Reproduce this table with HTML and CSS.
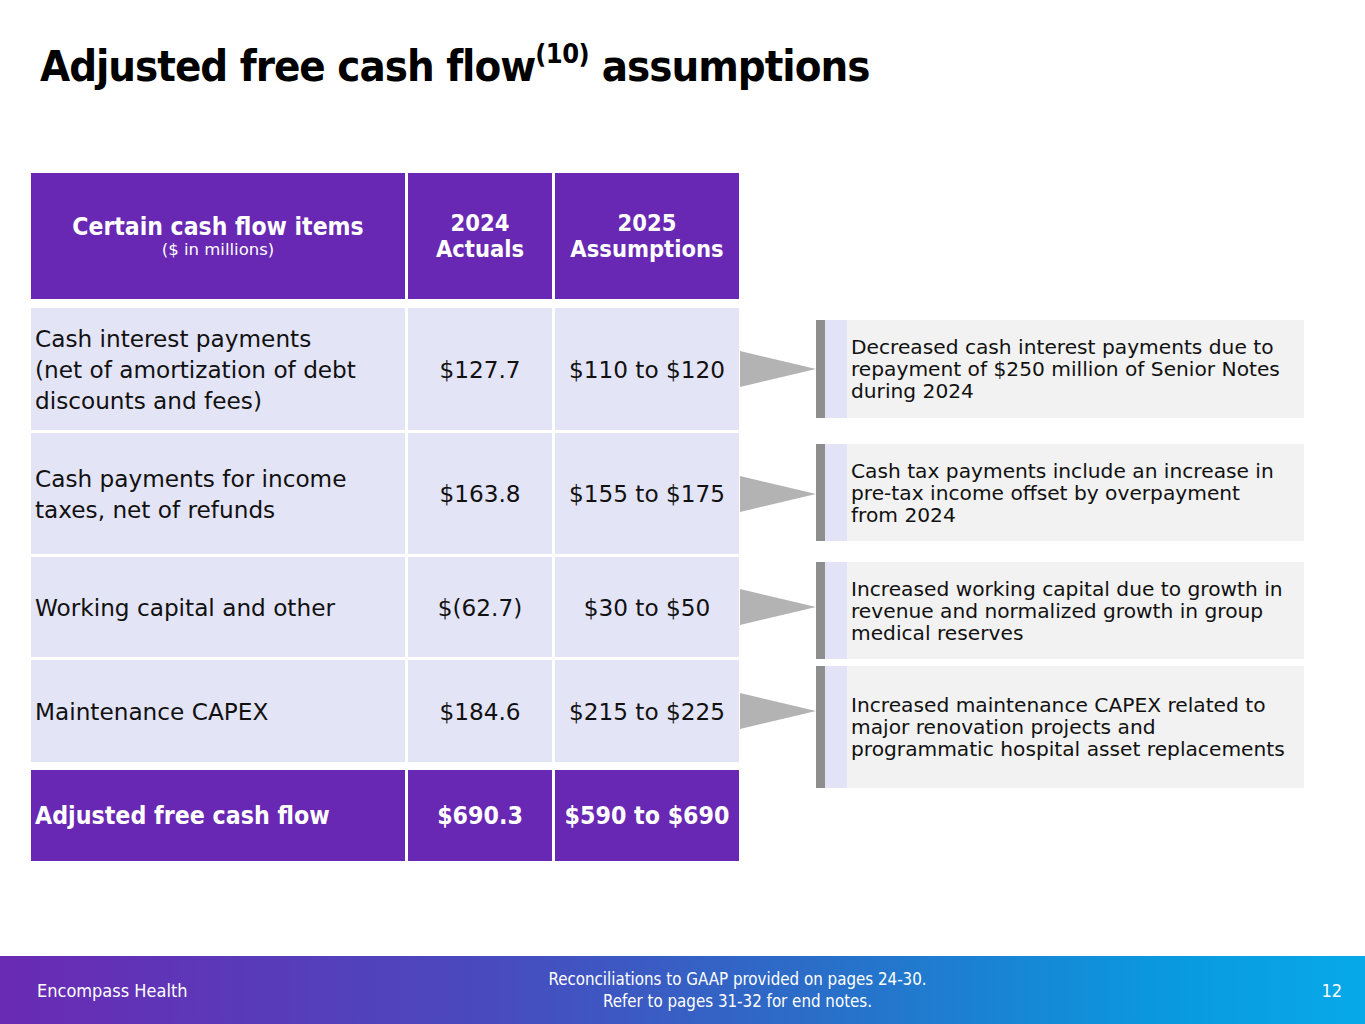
FILE: index.html
```html
<!DOCTYPE html>
<html lang="en">
<head>
<meta charset="utf-8">
<title>Adjusted free cash flow assumptions</title>
<link rel="stylesheet" href="styles.css">
</head>
<body>
<div class="slide">
  <h1 class="title">Adjusted free cash flow<sup>(10)</sup> assumptions</h1>
  <main class="content">
    <div class="table">
      <div class="row head">
        <div class="cell label-head"><span class="big">Certain cash flow items</span><span class="small">($ in millions)</span></div>
        <div class="cell center">2024<br>Actuals</div>
        <div class="cell center">2025<br>Assumptions</div>
        <div class="arrow-cell"></div>
      </div>
      <div class="body">
        <div class="row r1">
          <div class="cell label">Cash interest payments<br>(net of amortization of debt<br>discounts and fees)</div>
          <div class="cell center">$127.7</div>
          <div class="cell center">$110 to $120</div>
          <div class="arrow-cell"><svg class="arrow" width="76" height="36" viewBox="0 0 76 36"><polygon points="0,0 76,18 0,36" /></svg></div>
        </div>
        <div class="row r2">
          <div class="cell label">Cash payments for income<br>taxes, net of refunds</div>
          <div class="cell center">$163.8</div>
          <div class="cell center">$155 to $175</div>
          <div class="arrow-cell"><svg class="arrow" width="76" height="36" viewBox="0 0 76 36"><polygon points="0,0 76,18 0,36" /></svg></div>
        </div>
        <div class="row r3">
          <div class="cell label">Working capital and other</div>
          <div class="cell center">$(62.7)</div>
          <div class="cell center">$30 to $50</div>
          <div class="arrow-cell"><svg class="arrow" width="76" height="36" viewBox="0 0 76 36"><polygon points="0,0 76,18 0,36" /></svg></div>
        </div>
        <div class="row r4">
          <div class="cell label">Maintenance CAPEX</div>
          <div class="cell center">$184.6</div>
          <div class="cell center">$215 to $225</div>
          <div class="arrow-cell"><svg class="arrow" width="76" height="36" viewBox="0 0 76 36"><polygon points="0,0 76,18 0,36" /></svg></div>
        </div>
      </div>
      <div class="row total">
        <div class="cell label">Adjusted free cash flow</div>
        <div class="cell center">$690.3</div>
        <div class="cell center">$590 to $690</div>
        <div class="arrow-cell"></div>
      </div>
    </div>
    <div class="notes">
      <div class="note n1"><div class="note-text">Decreased cash interest payments due to<br>repayment of $250 million of Senior Notes<br>during 2024</div></div>
      <div class="note n2"><div class="note-text">Cash tax payments include an increase in<br>pre-tax income offset by overpayment<br>from 2024</div></div>
      <div class="note n3"><div class="note-text">Increased working capital due to growth in<br>revenue and normalized growth in group<br>medical reserves</div></div>
      <div class="note n4"><div class="note-text">Increased maintenance CAPEX related to<br>major renovation projects and<br>programmatic hospital asset replacements</div></div>
    </div>
  </main>
  <footer class="footer">
    <div class="brand">Encompass Health</div>
    <div class="foot-note">Reconciliations to GAAP provided on pages 24-30.<br>Refer to pages 31-32 for end notes.</div>
    <div class="page-num">12</div>
  </footer>
</div>
</body>
</html>
```
FILE: styles.css
```css
* { box-sizing: border-box; }
html, body { margin: 0; padding: 0; background: #ffffff; }
body {
  font-family: "DejaVu Sans", sans-serif;
  color: #111111;
}
.slide {
  width: 1365px;
  height: 1024px;
  position: relative;
  display: flex;
  flex-direction: column;
  overflow: hidden;
}
.title {
  margin: 0;
  padding: 39px 0 0 40px;
  font-family: "DejaVu Sans Condensed", "DejaVu Sans", sans-serif;
  font-stretch: condensed;
  font-size: 43.3px;
  letter-spacing: -1px;
  line-height: 54px;
  font-weight: bold;
  color: #000;
  height: 173px;
}
.title sup {
  font-size: 27px;
  letter-spacing: -0.5px;
  line-height: 0;
  vertical-align: 0;
  position: relative;
  top: -18px;
}
.content {
  display: flex;
  padding-left: 31px;
  flex: 1;
}
.table {
  display: flex;
  flex-direction: column;
}
.row {
  display: grid;
  grid-template-columns: 374px 144px 184px 74px;
  column-gap: 3px;
}
.cell {
  display: flex;
  align-items: center;
  font-size: 23.2px;
  line-height: 31px;
}
.center { justify-content: center; text-align: center; }
.head { height: 126px; margin-bottom: 9px; }
.head .cell {
  background: #6828b3;
  color: #fff;
  font-family: "DejaVu Sans Condensed", "DejaVu Sans", sans-serif;
  font-stretch: condensed;
  font-weight: bold;
  font-size: 23.5px;
  line-height: 26px;
}
.label-head {
  flex-direction: column;
  justify-content: center;
  text-align: center;
}
.label-head .big { font-size: 24.5px; line-height: 26px; padding-top: 2px; }
.label-head .small {
  font-family: "DejaVu Sans", sans-serif;
  font-stretch: normal;
  font-size: 16.5px;
  line-height: 20px;
  font-weight: normal;
}
.body { display: flex; flex-direction: column; gap: 3px; }
.body .cell { background: #e4e4f7; }
.label { padding-left: 4px; }
.r1 { height: 122px; }
.r2 { height: 121px; }
.r3 { height: 100px; }
.r4 { height: 102px; }
.total { height: 91px; margin-top: 8px; }
.total .cell {
  background: #6828b3;
  color: #fff;
  font-family: "DejaVu Sans Condensed", "DejaVu Sans", sans-serif;
  font-stretch: condensed;
  font-weight: bold;
  font-size: 24.7px;
}
.arrow-cell {
  display: flex;
  align-items: center;
  margin-left: -2px;
}
.arrow { display: block; }
.arrow polygon { fill: #b3b3b3; }
.notes {
  display: flex;
  flex-direction: column;
  width: 488px;
  padding-top: 147px;
}
.note {
  display: flex;
  align-items: center;
  background: #f2f2f2;
  border-left: 9px solid #8e8e8e;
  position: relative;
  padding-left: 26px;
}
.note::before {
  content: "";
  display: block;
  position: absolute;
  left: 0;
  top: 0;
  bottom: 0;
  width: 22px;
  background: #e3e3f7;
}
.note-text {
  font-size: 20.2px;
  line-height: 22px;
  color: #111;
  position: relative;
}
.n1 { height: 98px; }
.n2 { height: 97px; margin-top: 26px; }
.n3 { height: 97px; margin-top: 21px; }
.n4 { height: 122px; margin-top: 7px; }
.footer {
  height: 68px;
  background: linear-gradient(90deg, #6a2ab4 0%, #4a49be 35%, #2a6ec8 60%, #0a98de 85%, #07a9e9 100%);
  color: #fff;
  font-family: "DejaVu Sans Condensed", "DejaVu Sans", sans-serif;
  font-stretch: condensed;
  display: grid;
  grid-template-columns: 1fr auto 1fr;
  align-items: center;
  padding: 0 23px 0 37px;
  font-size: 16.8px;
}
.brand { font-size: 18px; }
.foot-note { text-align: center; line-height: 22px; font-size: 16.8px; padding-left: 96px; }
.page-num { justify-self: end; font-size: 18px; }
```
